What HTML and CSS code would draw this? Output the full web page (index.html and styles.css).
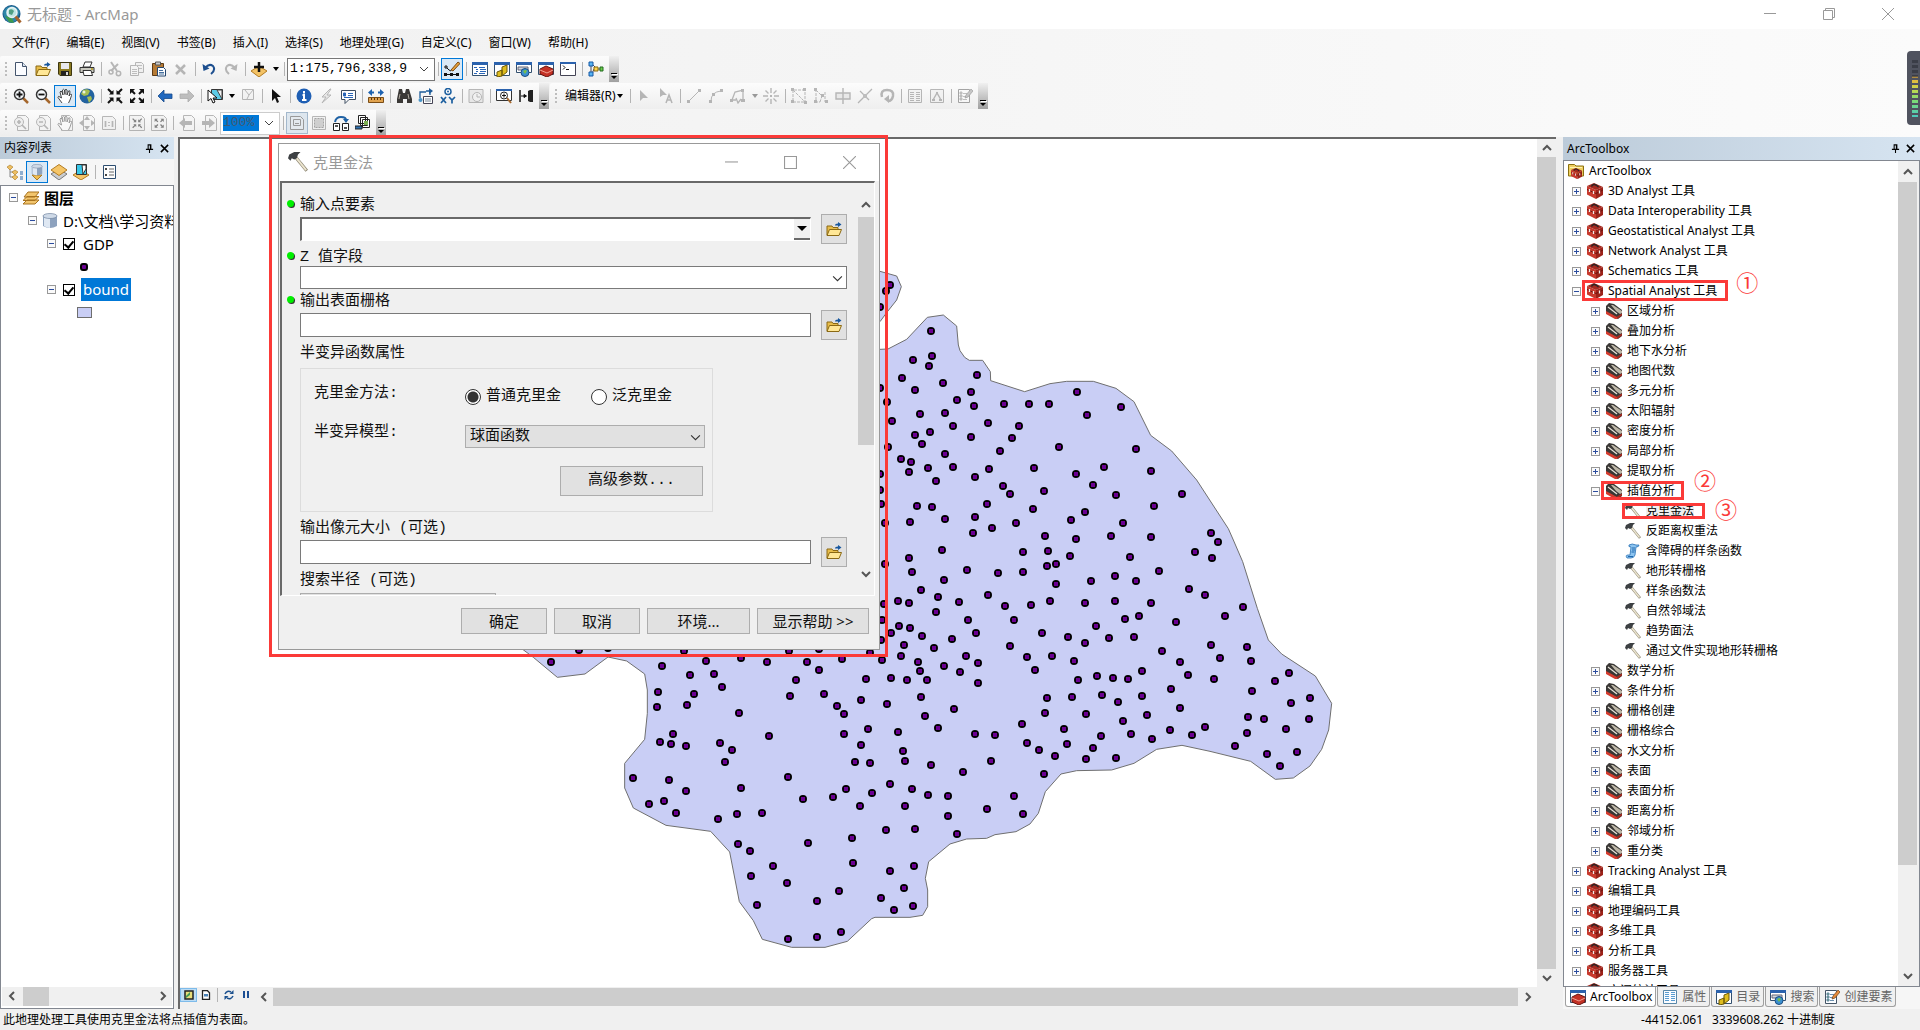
FILE: index.html
```html
<!DOCTYPE html>
<html lang="zh-CN">
<head>
<meta charset="utf-8">
<title>无标题 - ArcMap</title>
<link rel="stylesheet" href="styles.css">
</head>
<body>
<svg class="sprite" aria-hidden="true">
  <symbol id="app" viewBox="0 0 20 20"><circle cx="9.500" cy="10" r="9" fill="#1c5a8c"/><path d="M1 8q3-6 9-6 6 1 8 6l-4 9-6 2q-6-3-7-11z" fill="#2d86a8"/><path d="M3 12l4 6 5 1-2-5z" fill="#3f9a4c"/><circle cx="10" cy="8.500" r="5" fill="#bfe6e4" stroke="#e8f2f4" stroke-width="1.500"/><path d="M7 6q3-2 5 1l-2 4-3-1z" fill="#4f9f83"/><path d="M13.500 12.500l5 6" stroke="#a5642d" stroke-width="3"/></symbol>
  <symbol id="new" viewBox="0 0 16 16"><path d="M2.500 1.500h7l4 4v9h-11z" fill="#fbfcff" stroke="#44546c"/><path d="M9.500 1.500v4h4" fill="#dde6f2" stroke="#44546c"/></symbol>
  <symbol id="open" viewBox="0 0 16 16"><path d="M1 14V5h5l1 1.500h5V14z" fill="#e8bd4a" stroke="#8a6914"/><path d="M1 14.500L3.500 8.500h12L13 14.500z" fill="#ffe796" stroke="#8a6914"/><path d="M9 4.500q0-2 3-2V1l3.500 2.500L12 6V4.500z" fill="#17579e"/></symbol>
  <symbol id="save" viewBox="0 0 16 16"><path d="M1.500 1.500h13v13H3l-1.500-1.500z" fill="#8b7a21" stroke="#3d3610"/><path d="M4 2h8v6H4z" fill="#e8e8ec"/><path d="M4 10h8v4.500H4z" fill="#222"/><path d="M9 11h2v3H9z" fill="#ddd"/></symbol>
  <symbol id="print" viewBox="0 0 16 16"><path d="M4 6l2-5h7l-2 5z" fill="#fff" stroke="#333"/><path d="M1 6.500h14v5H1z" fill="#c9c9c0" stroke="#333"/><path d="M4 9.500h8l1.500 5H5z" fill="#fff" stroke="#333"/><path d="M12 8h2" stroke="#b39a1a" stroke-width="1.500"/></symbol>
  <symbol id="cut" viewBox="0 0 16 16"><path d="M4 1l6 9M11 3l-7 7" stroke="#777" stroke-width="2" fill="none"/><circle cx="4" cy="11" r="2" fill="none" stroke="#777" stroke-width="1.500"/><circle cx="11.500" cy="12.500" r="2.200" fill="none" stroke="#777" stroke-width="1.500"/></symbol>
  <symbol id="copy" viewBox="0 0 16 16"><path d="M6.500 1.500h6l2 2v8h-8z" fill="#ececec" stroke="#777"/><path d="M1.500 4.500h6l2 2v8h-8z" fill="#f4f4f4" stroke="#777"/><path d="M3 8.500h5M3 10.500h5M3 12.500h5M8 4.500h5M10 7.500h3" stroke="#888"/></symbol>
  <symbol id="paste" viewBox="0 0 16 16"><path d="M1.500 2.500h11v12h-11z" fill="#b57a35" stroke="#5d3a14"/><path d="M4.500 1h5v3h-5z" fill="#ccc" stroke="#555"/><path d="M6.500 6.500h6l2 2v6.500h-8z" fill="#fff" stroke="#24466f"/><path d="M8 9.500h4M8 11.500h5M8 13h5" stroke="#46709f"/></symbol>
  <symbol id="del" viewBox="0 0 16 16"><path d="M3 4l9 9M12 4l-9 9" stroke="#777" stroke-width="2.500"/></symbol>
  <symbol id="undo" viewBox="0 0 16 16"><path d="M4 7q4-5 8-2 3 4-2 8" fill="none" stroke="#1d4f8f" stroke-width="2"/><path d="M1.500 3l1 7 6-2.500z" fill="#1d4f8f"/></symbol>
  <symbol id="redo" viewBox="0 0 16 16"><path d="M12 7q-4-5-8-2-3 4 2 8" fill="none" stroke="#777" stroke-width="2"/><path d="M14.500 3l-1 7-6-2.500z" fill="#777"/></symbol>
  <symbol id="add" viewBox="0 0 16 16"><path d="M0 10l8-5 8 5-8 6z" fill="#f3c265" stroke="#b27b22"/><path d="M8 1v10M3 6h10" stroke="#111" stroke-width="2.500"/></symbol>
  <symbol id="sketch" viewBox="0 0 16 16"><path d="M7 9L14 1l2 1.500L9 10z" fill="#e8a23c" stroke="#7b4a10"/><path d="M1 5h2v2H1zM3 7l2 2 2 1" fill="none" stroke="#111"/><path d="M0 12h3v3H0zM6 12h3v3H6zM12 12h3v3h-3zM3 13h10v1H3z" fill="#111"/></symbol>
  <symbol id="toc" viewBox="0 0 16 16"><path d="M.5 1.500h15v13H.5z" fill="#fff" stroke="#33506f"/><path d="M0 1h16v3H0z" fill="#2b62ad"/><path d="M2 6.500h3M4 8.500h2M4 10.500h2M2 12.500h3M7 6.500h6M8 8.500h6M8 10.500h6M7 12.500h6" stroke="#2a66b8"/></symbol>
  <symbol id="catalog" viewBox="0 0 16 16"><path d="M.5 1.500h15v13H.5z" fill="#fff" stroke="#33506f"/><path d="M0 1h16v3H0z" fill="#2b62ad"/><path d="M8 6l5-2v7l-5 4zM3 11l5-2v6l-5 1z" fill="#dfbd1e" stroke="#6b5808"/></symbol>
  <symbol id="search" viewBox="0 0 16 16"><path d="M.5 1.500h15v10H.5z" fill="#fff" stroke="#33506f"/><path d="M0 1h16v3H0z" fill="#2b62ad"/><path d="M2 6h10v3H2z" fill="#cfd6de" stroke="#667"/><circle cx="9" cy="11.500" r="4" fill="#3b8fd0" stroke="#1a4c80"/><path d="M7 10q3-2 4 0l-2 3z" fill="#76bf4b"/></symbol>
  <symbol id="tbwin" viewBox="0 0 16 16"><path d="M.5 1.500h15v12H.5z" fill="#fff" stroke="#33506f"/><path d="M0 1h16v3H0z" fill="#2b62ad"/><path d="M2 8l6-3 7 3v5l-6 3-7-3z" fill="#c43125" stroke="#651510"/><path d="M2 9l7 3 6-3" stroke="#f0a090" fill="none"/></symbol>
  <symbol id="python" viewBox="0 0 16 16"><path d="M.5 1.500h15v13H.5z" fill="#fff" stroke="#445"/><path d="M0 1h16v2H0z" fill="#2b62ad"/><path d="M3 4.500l2 2-2 2M6 8.500h3" stroke="#111" fill="none"/></symbol>
  <symbol id="model" viewBox="0 0 16 16"><path d="M3 5v6M4 3l5 5H6l-2 5M9 8h5" stroke="#445" fill="none"/><path d="M1 1h4v4H1zM1 11h4v4H1z" fill="#58b4f2" stroke="#1759a5"/><path d="M6 6h4v4H6z" fill="#ffd34a" stroke="#8a6a10"/><path d="M12 6h3v4h-3z" fill="#6ccc4a" stroke="#236b20"/></symbol>
  <symbol id="zin" viewBox="0 0 16 16"><path d="M10 10l5 5" stroke="#a5672c" stroke-width="2.500"/><circle cx="6.500" cy="6.500" r="5" fill="#f5f8fb" stroke="#333" stroke-width="1.500"/><path d="M6.500 3.500v6M3.500 6.500h6" stroke="#111" stroke-width="1.800"/></symbol>
  <symbol id="zout" viewBox="0 0 16 16"><path d="M10 10l5 5" stroke="#a5672c" stroke-width="2.500"/><circle cx="6.500" cy="6.500" r="5" fill="#f5f8fb" stroke="#333" stroke-width="1.500"/><path d="M3.500 6.500h6" stroke="#111" stroke-width="1.800"/></symbol>
  <symbol id="hand" viewBox="0 0 16 16"><path d="M5 15L1 9.500q0-2 2-.500l1.500 1L3 4q1-2 2 0l1 3-.5-5q1-1.500 2 0L8 6.500V2q1-1.500 2 0v5l1.500-4q1.500-1 1.500 1l-1 4 1.500-2q1.500 0 1 1.500L13 12l-1.500 3" fill="#fff" stroke="#333" stroke-width=".9"/></symbol>
  <symbol id="globe" viewBox="0 0 16 16"><circle cx="8" cy="8" r="7.500" fill="#23639f"/><path d="M4 2q5-2 7 1l-2 4-4 1-3-2zM8 9l4-1 1 3-3 4z" fill="#a4bd52"/><circle cx="5" cy="4" r="1.500" fill="#e9f3e0"/></symbol>
  <symbol id="fixin" viewBox="0 0 16 16"><path d="M1 1l4 4M15 1l-4 4M1 15l4-4M15 15l-4-4" stroke="#111" stroke-width="2"/><path d="M6.500 2v4.500H2zM9.500 2v4.500H14zM6.500 14V9.500H2zM9.500 14V9.500H14z" fill="#111"/></symbol>
  <symbol id="fixout" viewBox="0 0 16 16"><path d="M3 3l3 3M13 3l-3 3M3 13l3-3M13 13l-3-3" stroke="#111" stroke-width="2"/><path d="M1 1h5L1 6zM15 1h-5l5 5zM1 15h5l-5-5zM15 15h-5l5-5z" fill="#111"/></symbol>
  <symbol id="back" viewBox="0 0 16 16"><path d="M1 8l6-6v4h8v4.500H7V14z" fill="#2068bf" stroke="#174a8c" stroke-width=".8"/></symbol>
  <symbol id="fwd" viewBox="0 0 16 16"><path d="M15 8L9 2v4H1v4.500h8V14z" fill="#888" stroke="#666" stroke-width=".8"/></symbol>
  <symbol id="selfeat" viewBox="0 0 16 16"><path d="M4.500 1.500h11v10h-11z" fill="#5ccbe6" stroke="#333"/><path d="M10 2h5v9z" fill="#f2f2f2" stroke="#444"/><path d="M1 2v11l3-2.500 2 4.500 2-1-2-4h4z" fill="#fff" stroke="#111"/></symbol>
  <symbol id="clearsel" viewBox="0 0 16 16"><path d="M2.500 1.500h11v10h-11z" fill="#f0f0f0" stroke="#777"/><path d="M5 2l4 5 4-5M9 7l-2 4" stroke="#777" fill="none"/></symbol>
  <symbol id="pointer" viewBox="0 0 16 16"><path d="M4 1v12l3-3 2 5 2-1-2-5h4z" fill="#111"/></symbol>
  <symbol id="info" viewBox="0 0 16 16"><circle cx="8" cy="8" r="7.500" fill="#1f5fb4"/><path d="M8 3v2.500M6.500 7H8v5M6 12h4.500" stroke="#fff" stroke-width="2" fill="none"/></symbol>
  <symbol id="flash" viewBox="0 0 16 16"><path d="M12 1L4 9h4l-4 6 9-8H9l4-6z" fill="#ddd" stroke="#777"/></symbol>
  <symbol id="popup" viewBox="0 0 16 16"><path d="M1.500 2.500h14v9H9l-4 4v-4H1.500z" fill="#fff" stroke="#3c4c60"/><path d="M3.500 5h2v3h-2zM8 5.500h5M8 7.500h5M4 9.500h9" fill="#2a66b8" stroke="#2a66b8"/></symbol>
  <symbol id="measure" viewBox="0 0 16 16"><path d="M0 4.500L4 1v2.500h2v2H4V8zM16 4.500L12 1v2.500h-2v2h2V8z" fill="#1d62b0"/><path d="M.5 9.500h15v5H.5z" fill="#e0a24e" stroke="#7a4d16"/><path d="M3.500 10v2M6.500 10v2M9.500 10v2M12.500 10v2" stroke="#5a350c"/></symbol>
  <symbol id="find" viewBox="0 0 16 16"><path d="M3 1h3l1 4h2l1-4h3l3 10v4h-5v-4H7v4H1v-4z" fill="#3a3836"/><path d="M4 6l-1 5M12 6l1 5" stroke="#b0aaa0"/></symbol>
  <symbol id="route" viewBox="0 0 16 16"><path d="M2 10V4h6M8 3h4v4" stroke="#1d5c9a" stroke-width="1.300" fill="none"/><path d="M11 0l4 3-4 3z" fill="#1d5c9a"/><path d="M5.500 8.500h9v7h-9z" fill="#fff" stroke="#445"/><path d="M7 11h6M7 13h6" stroke="#789"/><circle cx="2.500" cy="12" r="2" fill="#4a95c8"/></symbol>
  <symbol id="xy" viewBox="0 0 16 16"><circle cx="8" cy="3.500" r="3" fill="#fff" stroke="#1c5f9f" stroke-width="1.500"/><circle cx="8" cy="3.500" r="1" fill="#1c5f9f"/><path d="M1 9l5 6M6 9l-5 6M9 9l3 3 3-3M12 12v3.500" stroke="#1c5f9f" stroke-width="1.700" fill="none"/></symbol>
  <symbol id="time" viewBox="0 0 16 16"><path d="M1 1.500h14v13H1z" fill="#ddd" stroke="#777"/><circle cx="9" cy="9" r="4.500" fill="#eee" stroke="#777"/><path d="M9 6v3h3" stroke="#777" fill="none"/></symbol>
  <symbol id="magnify" viewBox="0 0 16 16"><path d="M.5 1.500h15v11H.5z" fill="#fff" stroke="#333"/><path d="M0 1h16v2H0z" fill="#2b62ad"/><path d="M11 10l4 5" stroke="#a5672c" stroke-width="2"/><circle cx="8" cy="7.500" r="3.500" fill="#fff" stroke="#222"/><path d="M8 5.500v4M6 7.500h4" stroke="#111"/></symbol>
  <symbol id="swipe" viewBox="0 0 16 16"><path d="M2 2v12" stroke="#111" stroke-width="1.500"/><path d="M3 8h5M6 6.500L8.500 8 6 9.500z" stroke="#111" fill="#111"/><path d="M10 3l2-1h3v12h-3l-2-1z" fill="#222"/></symbol>
  <symbol id="play" viewBox="0 0 16 16"><path d="M4 2v11l3-3h5z" fill="#777"/></symbol>
  <symbol id="playa" viewBox="0 0 16 16"><path d="M2 0v9l3-2h4z" fill="#777"/><path d="M8 15l3-8 3 8M9 12h4" stroke="#777" stroke-width="1.500" fill="none"/></symbol>
  <symbol id="line" viewBox="0 0 16 16"><path d="M3 13L13 3" stroke="#777"/><path d="M1 12h3v3H1zM12 1h3v3h-3z" fill="#777"/></symbol>
  <symbol id="arc" viewBox="0 0 16 16"><path d="M3 13Q3 4 13 3" stroke="#777" fill="none"/><path d="M1 12h3v3H1zM12 1h3v3h-3zM4 5h3v3H4z" fill="#777"/></symbol>
  <symbol id="trace" viewBox="0 0 16 16"><path d="M2 12l3-8 8-2v10M2 12h4M6 10l2 5 3-4" stroke="#777" fill="none" stroke-width="1.300"/><path d="M0 11h3v3H0zM11 1h3v3h-3zM11 11h4v3h-4z" fill="#777"/></symbol>
  <symbol id="rays" viewBox="0 0 16 16"><path d="M8 0v5M8 11v5M0 8h5M11 8h5M2.500 2.500l3 3M13.500 2.500l-3 3M2.500 13.500l3-3M13.500 13.500l-3-3" stroke="#777" stroke-width="1.400"/><path d="M7 7h2v2H7z" fill="#777"/></symbol>
  <symbol id="verts" viewBox="0 0 16 16"><path d="M2 2l12 12V3M2 2v12h12M3 2h9" stroke="#777" fill="none" stroke-dasharray="3 1"/><path d="M0 0h3v3H0zM12 0h3v3h-3zM0 12h3v3H0zM13 13h3v3h-3z" fill="#777"/></symbol>
  <symbol id="reshape" viewBox="0 0 16 16"><path d="M3 1v13h4M3 2l6 6-2 6M12 4v10" stroke="#777" fill="none" stroke-dasharray="3 1"/><path d="M1 0h3v3H1zM1 12h3v3H1zM8 6h3v3H8zM12 12h3v3h-3z" fill="#777"/></symbol>
  <symbol id="split" viewBox="0 0 16 16"><path d="M1 5h14v6H1zM8 0v16" fill="#ddd" stroke="#777" stroke-width="1.400"/></symbol>
  <symbol id="cross" viewBox="0 0 16 16"><path d="M1 15L15 1M3 3l9 9" stroke="#777" stroke-width="1.300"/><path d="M6 6h4v4H6z" fill="#888"/></symbol>
  <symbol id="rotate" viewBox="0 0 16 16"><path d="M3 9Q1 2 8 2t6 6q-1 5-5 5" stroke="#777" stroke-width="2.500" fill="none"/><path d="M10 7v8l-5-4z" fill="#777"/></symbol>
  <symbol id="table" viewBox="0 0 16 16"><path d="M1.500 1.500h13v13h-13z" fill="#eee" stroke="#777"/><path d="M3 4.500h4M3 6.500h4M3 8.500h4M3 10.500h4M3 12.500h4M9 4.500h4M9 6.500h4M9 8.500h4M9 10.500h4M9 12.500h4" stroke="#777"/></symbol>
  <symbol id="props" viewBox="0 0 16 16"><path d="M1.500 1.500h13v13h-13z" fill="#fafcff" stroke="#5887a8"/><path d="M3 3.500h4M3 5.500h4M3 7.500h4M3 9.500h4M3 11.500h4M9 3.500h4M9 5.500h4M9 7.500h4M9 9.500h4M9 11.500h4" stroke="#5a9cd0"/></symbol>
  <symbol id="tri" viewBox="0 0 16 16"><path d="M1.500 1.500h13v13h-13z" fill="#eee" stroke="#777"/><path d="M4 12l4-7 4 7" stroke="#777" fill="none" stroke-width="1.400"/><path d="M3 11h3v2H3zM10 11h3v2h-3zM7 4h2v2H7z" fill="#777"/></symbol>
  <symbol id="create" viewBox="0 0 16 16"><path d="M1.500 1.500h11v13h-11z" fill="#fbfdff" stroke="#456"/><path d="M3 4h2v2H3zM3 7h2v2H3zM3 10h2v2H3zM6 5.500h4M6 8.500h3M6 11.500h4" fill="#5a9a50" stroke="#6c8fae"/><path d="M8 10l1-3 5-6 2 2-5 6z" fill="#e58a3a" stroke="#6d4016" stroke-width=".7"/></symbol>
  <symbol id="page" viewBox="0 0 16 16"><path d="M4.500.5h8l3 3v12h-11z" fill="#f4f4f4" stroke="#777"/></symbol>
  <symbol id="pzin" viewBox="0 0 16 16"><use href="#page"/><circle cx="6" cy="7" r="4.500" fill="#e8e8e8" stroke="#777"/><path d="M6 5v4M4 7h4M9 10l4 4" stroke="#777" stroke-width="1.700"/></symbol>
  <symbol id="pzout" viewBox="0 0 16 16"><use href="#page"/><circle cx="6" cy="7" r="4.500" fill="#e8e8e8" stroke="#777"/><path d="M4 7h4M9 10l4 4" stroke="#777" stroke-width="1.700"/></symbol>
  <symbol id="phand" viewBox="0 0 16 16"><use href="#page"/><use href="#hand"/></symbol>
  <symbol id="pfull" viewBox="0 0 16 16"><use href="#page"/><path d="M8 1l3 4H5zM8 15l3-4H5zM0 8l4-3v6zM16 8l-4-3v6z" fill="#777"/></symbol>
  <symbol id="pone" viewBox="0 0 16 16"><path d="M1.500 1.500h10l3 3v10h-13z" fill="#eee" stroke="#777"/><path d="M4.500 6v6M8 7v1M8 10v1M11.500 6v6" stroke="#777" stroke-width="1.700"/></symbol>
  <symbol id="pin4" viewBox="0 0 16 16"><path d="M.5.5h12l3 3v12H.5z" fill="#eee" stroke="#777"/><g transform="translate(3 3) scale(.65)"><use href="#fixin" width="16" height="16"/></g></symbol>
  <symbol id="pout4" viewBox="0 0 16 16"><path d="M.5.5h12l3 3v12H.5z" fill="#eee" stroke="#777"/><g transform="translate(3 3) scale(.65)"><use href="#fixout" width="16" height="16"/></g></symbol>
  <symbol id="pback" viewBox="0 0 16 16"><use href="#page"/><path d="M0 8l6-5v3h7v4H6v3z" fill="#777"/></symbol>
  <symbol id="pfwd" viewBox="0 0 16 16"><use href="#page"/><path d="M14 8L8 3v3H1v4h7v3z" fill="#777"/></symbol>
  <symbol id="draft" viewBox="0 0 16 16"><path d="M1.500 1.500h10l3 3v10h-13z" fill="#e4e9ee" stroke="#999"/><path d="M4.500 4.500h7v6h-7zM6 8.500h4" fill="none" stroke="#999"/></symbol>
  <symbol id="focus" viewBox="0 0 16 16"><path d="M1.500 1.500h13v13h-13z" fill="#eee" stroke="#777"/><path d="M3.500 3.500h9v9h-9z" fill="#aaa" stroke="#555" stroke-dasharray="2 1"/></symbol>
  <symbol id="chglay" viewBox="0 0 16 16"><path d="M2 7q1-5 6-5t5 3" stroke="#1f62a5" stroke-width="2" fill="none"/><path d="M10 4h6l-3 4z" fill="#1f62a5"/><path d="M.5 8.500h6v7h-6zM9.500 8.500h6v7h-6z" fill="#fff" stroke="#222"/><path d="M2 10h3v2H2zM11 12h3v2h-3z" fill="#555"/></symbol>
  <symbol id="ddp" viewBox="0 0 16 16"><path d="M3.500.5h7v8h-7zM5.500 2.500h7v8h-7zM7.500 4.500h7v8h-7z" fill="#fff" stroke="#222"/><path d="M9 6h4v4H9z" fill="#7cae52"/><path d="M0 11h7v3H0z" fill="#2d71b2" stroke="#222"/></symbol>
  <symbol id="hammer" viewBox="0 0 16 16"><path d="M6 4l9 11" stroke="#8d8673" stroke-width="2.600"/><path d="M6.500 4.500l8 10" stroke="#ece5cf" stroke-width="1.500"/><path d="M0 5l1-3 4-2h5L8 2l-1 3-2 1-2-1-1 2z" fill="#3d4043"/></symbol>
  <symbol id="script" viewBox="0 0 16 16"><path d="M4 2q3-2 7 0h3q0 2-3 2l-1 8q-1 3-4 3H2q-2-3 1-3h2l1-8q-3 0-2-2z" fill="#8cc4f0" stroke="#2b72b5" stroke-width=".8"/><path d="M7 5h3M7 7h3M6.500 9h3M3 13.500h5" stroke="#1f67ad"/></symbol>
  <symbol id="toolbox" viewBox="0 0 16 16"><path d="M0 3l9 4v9l-9-4.500z" fill="#c8392d"/><path d="M9 7l7-3v8l-7 4z" fill="#9c2219"/><path d="M0 3l7-3 9 4-7 3z" fill="#a52a20"/><path d="M4.500 3.500q1-2.500 3-2t4 2.500" stroke="#2a2424" stroke-width="1.500" fill="none"/><path d="M0 6.500L9 10.500l7-3.500" stroke="#6f120c" fill="none"/><path d="M2.500 6v3M6.500 8v3M12.500 7.500v3" stroke="#f3ece8" stroke-width="1.300"/></symbol>
  <symbol id="toolset" viewBox="0 0 16 16"><path d="M0 3l3-3 5 1 8 6v6l-4 3L0 9z" fill="#393735"/><path d="M5 2l2 0 9 6v2l-2 1-4-3z" fill="#bdb7a8"/><path d="M2 4l9 7" stroke="#e8e4da" stroke-width="1.200"/><path d="M0 8l11 6v2H9L0 11z" fill="#d43b2d"/><path d="M11 13.500l5-3v2l-5 3.500z" fill="#a82a20"/></symbol>
  <symbol id="root" viewBox="0 0 16 16"><path d="M.5 13V1.500h6L8 3h7.500v10z" fill="#f0d060" stroke="#8a7010"/><path d="M2 4.500h12" stroke="#fff3b0"/><g transform="translate(3 5) scale(.7)"><use href="#toolbox" width="16" height="16"/></g></symbol>
  <symbol id="layers" viewBox="0 0 16 16"><path d="M0 14l4-4h12l-4 4zM0 10.500l4-4h12l-4 4zM1 7l4-5h11l-4 5z" fill="#f2c56d" stroke="#a8731f"/></symbol>
  <symbol id="db" viewBox="0 0 16 16"><path d="M1 3v10q7 4 14 0V3z" fill="#8da2be"/><path d="M2 4v9q3 2 6 2V5z" fill="#dfe8f3"/><ellipse cx="8" cy="3" rx="7" ry="2.500" fill="#cfdae8" stroke="#7385a0" stroke-width=".7"/></symbol>
  <symbol id="bydraw" viewBox="0 0 16 16"><path d="M3 5v8h4M3 8h4" stroke="#888" fill="none"/><path d="M3 1l3 2-3 3-3-3zM8 6l3 2-3 3-3-3zM8 11l3 2-3 3-3-3z" fill="#eebf62" stroke="#a87926" stroke-width=".6"/><path d="M13 8h3M13 10h3M13 13h3M13 15h3" stroke="#2a66a8"/></symbol>
  <symbol id="bysrc" viewBox="0 0 16 16"><path d="M3 11h10l-5 5z" fill="#f0bd50" stroke="#a87926"/><g transform="translate(2 0) scale(.75)"><use href="#db" width="16" height="16"/></g></symbol>
  <symbol id="byvis" viewBox="0 0 16 16"><path d="M0 10l8-5 8 5-8 6z" fill="#c9ccd0" stroke="#777"/><path d="M0 6l8-5.500L16 6l-8 5.500z" fill="#f5c567" stroke="#b27b22"/></symbol>
  <symbol id="bysel" viewBox="0 0 16 16"><path d="M0 11l8-5 8 5-8 5z" fill="#f5c567" stroke="#b27b22"/><path d="M3.500.5h10v10h-10z" fill="#39c7e8" stroke="#333"/><path d="M9 1h4v4l-3 5z" fill="#fff" stroke="#333"/></symbol>
  <symbol id="opts" viewBox="0 0 16 16"><path d="M2.500 1.500h12v13h-12z" fill="#fdfdfd" stroke="#2d4d70"/><path d="M4 4h2v2H4zM4 10h2v2H4z" fill="#444"/><path d="M8 5h5M8 8h5M8 11h5" stroke="#666"/></symbol>
  <symbol id="mapview" viewBox="0 0 10 10"><path d="M1 1h8v8H1z" fill="#e8dd7a" stroke="#222" stroke-width="1.500"/><path d="M2 6l4-4v3L2 8z" fill="#3f9b58"/></symbol>
  <symbol id="layview" viewBox="0 0 10 10"><path d="M1.500.7h5l2 2v6.600h-7z" fill="#fff" stroke="#222" stroke-width="1.300"/><path d="M3 4h4v2.500H3z" fill="#4a81b5"/></symbol>
  <symbol id="refresh" viewBox="0 0 10 10"><path d="M1 4q2-4 6-2M9 6q-2 4-6 2" stroke="#1b508e" stroke-width="1.500" fill="none"/><path d="M9.500 0v4h-4zM.5 10V6h4z" fill="#1b508e"/></symbol>
  <symbol id="pause" viewBox="0 0 10 10"><path d="M2 1h2v7H2zM6 1h2v7H6z" fill="#1d4f94"/></symbol>
  <symbol id="chev" viewBox="0 0 10 10"><path d="M1 3l4 4 4-4" stroke="currentColor" stroke-width="2" fill="none"/></symbol>
  <symbol id="chevthin" viewBox="0 0 10 10"><path d="M1 3l4 4 4-4" stroke="currentColor" fill="none"/></symbol>
  <symbol id="pin" viewBox="0 0 10 10"><path d="M3.500 6V1h3v5M6 1v5M1 6h8M5 6v4" stroke="#000" stroke-width="1.200" fill="none"/></symbol>
  <symbol id="x" viewBox="0 0 10 10"><path d="M1 1l8 8M9 1L1 9" stroke="currentColor" stroke-width="1.700"/></symbol>
  <symbol id="xthin" viewBox="0 0 12 12"><path d="M0 0l12 12M12 0L0 12" stroke="currentColor"/></symbol>
  <symbol id="min" viewBox="0 0 12 12"><path d="M0 5.500h12" stroke="currentColor"/></symbol>
  <symbol id="max" viewBox="0 0 12 12"><path d="M.5.5h11v11H.5z" fill="none" stroke="currentColor"/></symbol>
  <symbol id="restore" viewBox="0 0 12 12"><path d="M.5 2.500h9v9h-9zM2.500 2V.5h9v9H10" fill="none" stroke="currentColor"/></symbol>
</svg>

<div class="app">
  <header class="titlebar">
    <svg class="logo"><use href="#app"/></svg>
    <h1>无标题 - ArcMap</h1>
    <div class="winbtns">
      <button aria-label="最小化"><svg><use href="#min"/></svg></button>
      <button aria-label="还原"><svg><use href="#restore"/></svg></button>
      <button aria-label="关闭"><svg><use href="#xthin"/></svg></button>
    </div>
  </header>

  <nav class="menubar">
    <button>文件(F)</button><button>编辑(E)</button><button>视图(V)</button><button>书签(B)</button><button>插入(I)</button><button>选择(S)</button><button>地理处理(G)</button><button>自定义(C)</button><button>窗口(W)</button><button>帮助(H)</button>
  </nav>

  <div class="toolrow">
    <div class="toolbar">
      <i class="grip"></i>
      <button class="tb"><svg><use href="#new"/></svg></button><button class="tb"><svg><use href="#open"/></svg></button><button class="tb"><svg><use href="#save"/></svg></button><button class="tb"><svg><use href="#print"/></svg></button><i class="sep"></i>
      <button class="tb" disabled><svg><use href="#cut"/></svg></button><button class="tb" disabled><svg><use href="#copy"/></svg></button><button class="tb"><svg><use href="#paste"/></svg></button><button class="tb" disabled><svg><use href="#del"/></svg></button><i class="sep"></i>
      <button class="tb"><svg><use href="#undo"/></svg></button><button class="tb" disabled><svg><use href="#redo"/></svg></button><i class="sep"></i>
      <button class="tb"><svg><use href="#add"/></svg></button><button class="drop" aria-label="添加数据选项"></button><i class="sep"></i>
      <span class="combo scale"><input type="text" value="1:175,796,338,9" aria-label="比例尺"><button aria-label="展开"><svg><use href="#chevthin"/></svg></button></span><i class="sep"></i>
      <button class="tb on"><svg><use href="#sketch"/></svg></button><i class="sep"></i>
      <button class="tb"><svg><use href="#toc"/></svg></button><button class="tb"><svg><use href="#catalog"/></svg></button><button class="tb"><svg><use href="#search"/></svg></button><button class="tb"><svg><use href="#tbwin"/></svg></button><button class="tb"><svg><use href="#python"/></svg></button><i class="sep"></i>
      <button class="tb"><svg><use href="#model"/></svg></button>
      <button class="more" aria-label="工具条选项"></button>
    </div>
  </div>
  <div class="toolrow">
    <div class="toolbar">
      <i class="grip"></i>
      <button class="tb"><svg><use href="#zin"/></svg></button><button class="tb"><svg><use href="#zout"/></svg></button><button class="tb on"><svg><use href="#hand"/></svg></button><button class="tb"><svg><use href="#globe"/></svg></button><i class="sep"></i>
      <button class="tb"><svg><use href="#fixin"/></svg></button><button class="tb"><svg><use href="#fixout"/></svg></button><i class="sep"></i>
      <button class="tb"><svg><use href="#back"/></svg></button><button class="tb" disabled><svg><use href="#fwd"/></svg></button><i class="sep"></i>
      <button class="tb"><svg><use href="#selfeat"/></svg></button><button class="drop" aria-label="选择选项"></button><button class="tb" disabled><svg><use href="#clearsel"/></svg></button><i class="sep"></i>
      <button class="tb"><svg><use href="#pointer"/></svg></button><i class="sep"></i>
      <button class="tb"><svg><use href="#info"/></svg></button><button class="tb" disabled><svg><use href="#flash"/></svg></button><button class="tb"><svg><use href="#popup"/></svg></button><i class="sep"></i>
      <button class="tb"><svg><use href="#measure"/></svg></button><i class="sep"></i>
      <button class="tb"><svg><use href="#find"/></svg></button><button class="tb"><svg><use href="#route"/></svg></button><button class="tb"><svg><use href="#xy"/></svg></button><i class="sep"></i>
      <button class="tb" disabled><svg><use href="#time"/></svg></button><i class="sep"></i>
      <button class="tb"><svg><use href="#magnify"/></svg></button><button class="tb"><svg><use href="#swipe"/></svg></button>
      <button class="more" aria-label="工具条选项"></button>
    </div>
    <div class="toolbar">
      <i class="grip"></i>
      <button class="editor">编辑器(R)<i class="caret"></i></button><i class="sep"></i>
      <button class="tb" disabled><svg><use href="#play"/></svg></button><button class="tb" disabled><svg><use href="#playa"/></svg></button><i class="sep"></i>
      <button class="tb" disabled><svg><use href="#line"/></svg></button><button class="tb" disabled><svg><use href="#arc"/></svg></button><button class="tb" disabled><svg><use href="#trace"/></svg></button><button class="drop" disabled aria-label="构造选项"></button><button class="tb" disabled><svg><use href="#rays"/></svg></button><i class="sep"></i>
      <button class="tb" disabled><svg><use href="#verts"/></svg></button><button class="tb" disabled><svg><use href="#reshape"/></svg></button><button class="tb" disabled><svg><use href="#split"/></svg></button><button class="tb" disabled><svg><use href="#cross"/></svg></button><button class="tb" disabled><svg><use href="#rotate"/></svg></button><i class="sep"></i>
      <button class="tb" disabled><svg><use href="#table"/></svg></button><button class="tb" disabled><svg><use href="#tri"/></svg></button><i class="sep"></i>
      <button class="tb" disabled><svg><use href="#create"/></svg></button>
      <button class="more" aria-label="工具条选项"></button>
    </div>
  </div>
  <div class="toolrow">
    <div class="toolbar">
      <i class="grip"></i>
      <button class="tb" disabled><svg><use href="#pzin"/></svg></button><button class="tb" disabled><svg><use href="#pzout"/></svg></button><button class="tb" disabled><svg><use href="#phand"/></svg></button><button class="tb" disabled><svg><use href="#pfull"/></svg></button><button class="tb" disabled><svg><use href="#pone"/></svg></button><i class="sep"></i>
      <button class="tb" disabled><svg><use href="#pin4"/></svg></button><button class="tb" disabled><svg><use href="#pout4"/></svg></button><i class="sep"></i>
      <button class="tb" disabled><svg><use href="#pback"/></svg></button><button class="tb" disabled><svg><use href="#pfwd"/></svg></button>
      <span class="combo percent"><span class="pct">100%</span><button disabled aria-label="展开"><svg><use href="#chevthin"/></svg></button></span><i class="sep"></i>
      <button class="tb dim"><svg><use href="#draft"/></svg></button><button class="tb" disabled><svg><use href="#focus"/></svg></button><button class="tb"><svg><use href="#chglay"/></svg></button><button class="tb"><svg><use href="#ddp"/></svg></button>
      <button class="more" aria-label="工具条选项"></button>
    </div>
  </div>

  <main class="work">
    <aside class="contents">
      <div class="panelhead"><h2>内容列表</h2><button aria-label="固定"><svg><use href="#pin"/></svg></button><button aria-label="关闭"><svg><use href="#x"/></svg></button></div>
      <div class="listbar"><button class="tb"><svg><use href="#bydraw"/></svg></button><button class="tb on"><svg><use href="#bysrc"/></svg></button><button class="tb"><svg><use href="#byvis"/></svg></button><button class="tb"><svg><use href="#bysel"/></svg></button><i class="sep"></i><button class="tb"><svg><use href="#opts"/></svg></button></div>
      <div class="layerbox">
        <ul class="layers">
          <li><div class="lrow"><button class="exp open" aria-label="折叠"></button><svg><use href="#layers"/></svg><b>图层</b></div>
            <ul>
              <li><div class="lrow"><button class="exp open" aria-label="折叠"></button><svg><use href="#db"/></svg><span>D:\文档\学习资料</span></div>
                <ul>
                  <li><div class="lrow"><button class="exp open" aria-label="折叠"></button><label><input type="checkbox" checked><span>GDP</span></label></div><div class="lrow sym"><i class="dot"></i></div></li>
                  <li><div class="lrow"><button class="exp open" aria-label="折叠"></button><label><input type="checkbox" checked><span class="sel">bound</span></label></div><div class="lrow sym"><i class="patch"></i></div></li>
                </ul>
              </li>
            </ul>
          </li>
        </ul>
        <div class="hscroll"><button aria-label="向左"><svg class="left"><use href="#chev"/></svg></button><div class="track"><i class="thumb short"></i></div><button aria-label="向右"><svg class="right"><use href="#chev"/></svg></button></div>
      </div>
    </aside>

    <section class="mapwin">
      <div class="maprow">
        <div class="canvas">
          <svg class="map" role="img" aria-label="bound 与 GDP 图层">
            <g transform="translate(700 401) scale(.33333)">
              <path class="land" d="M0-572L24-573 80-602 142-668 190-675 230-642 235-585 240-568 254-548 268-539H308L331-505 332-478 434-445 510-469 560-476H640L708-455 762-415 812-314 875-267 950-180 1045-34 1060 0 1088 65 1132 205 1165 300 1205 342 1306 408 1355 490 1346 570 1325 628 1290 678 1240 714 1186 718 1112 664 990 634 906 616 830 628 762 670 695 690 590 692 543 702 496 755 475 820 450 852 408 875 345 884 320 895 260 897 210 912 146 965 136 1015 143 1050V1100L128 1126 90 1132H-15L-25 1136-98 1204-165 1222H-265L-353 1198-380 1142-422 1085-451 936-508 874-642 856-740 804-766 744V670L-706 598-698 520V450L-706 402-760 363-816 351-885 402-968 412-1040 352-1072 328V0z"/>
              <path class="land" d="M-40-812L0-806 50-792 64-760 50-720 20-682 0-655-60-620z"/>
              <g class="dots">
                <path id="pu" transform="translate(0 -840)" d="M30 75h0M18 93h0M0 141h0M153 213h0M99 300h0M156 288h0M147 318h0M66 354h0M189 369h0M291 345h0M105 390h0M273 396h0M231 420h0M282 438h0M0 384h0M21 426h0M120 462h0M195 459h0M36 483h0M219 498h0M372 432h0M447 432h0M507 432h0M591 396h0M621 465h0M723 441h0M324 489h0M417 498h0M396 534h0M105 525h0M150 516h0M126 552h0M273 531h0M24 561h0M63 597h0M93 606h0M195 582h0M360 573h0M537 561h0M768 567h0M87 636h0M144 624h0M219 621h0M327 627h0M462 624h0M588 642h0M672 621h0M813 633h0M168 663h0M285 651h0M369 678h0M390 702h0M492 693h0M639 675h0M708 705h0M906 702h0M0 642h0M0 690h0M3 732h0M111 738h0M156 741h0M321 732h0M459 747h0M615 756h0M822 738h0M90 786h0M195 777h0M285 771h0M408 789h0M573 780h0M729 789h0M15 789h0M279 819h0M336 804h0M495 828h0M588 837h0M693 828h0M813 831h0M993 819h0M1014 846h0"/>
                <path id="pm" d="M87 54h0M186 30h0M429 36h0M504 33h0M570 48h0M750 51h0M945 36h0M996 54h0M15 72h0M96 96h0M261 90h0M354 99h0M429 96h0M501 78h0M528 72h0M837 93h0M192 120h0M123 150h0M174 171h0M324 165h0M528 132h0M633 123h0M705 108h0M768 123h0M927 147h0M975 165h0M54 183h0M87 189h0M237 186h0M375 198h0M453 195h0M510 183h0M615 189h0M705 183h0M813 189h0M1089 201h0M12 192h0M168 216h0M264 240h0M402 240h0M6 240h0M735 237h0M777 228h0M888 246h0M1035 228h0M57 258h0M90 264h0M33 279h0M126 288h0M216 297h0M288 279h0M486 279h0M564 291h0M615 309h0M648 258h0M687 294h0M762 291h0M3 300h0M72 315h0M162 324h0M390 318h0M993 315h0M1101 321h0M63 348h0M114 366h0M258 348h0M294 369h0M441 351h0M516 348h0M582 363h0M846 333h0M900 366h0M1020 354h0M1113 363h0M6 360h0M120 393h0M192 378h0M240 396h0M465 390h0M651 408h0M699 414h0M744 417h0M786 393h0M924 405h0M1227 399h0M33 414h0M81 420h0M141 420h0M294 429h0M594 420h0M1002 417h0M1185 423h0M873 447h0M123 471h0M501 474h0M576 471h0M666 465h0M786 468h0M1116 453h0M1290 474h0M21 492h0M222 507h0M714 486h0M1233 489h0M135 528h0M495 519h0M618 522h0M801 525h0M900 504h0M1104 531h0M1152 537h0M1287 537h0M174 564h0M426 552h0M552 567h0M729 543h0M1218 567h0M54 576h0M285 582h0M345 585h0M663 588h0M753 582h0M870 570h0M936 585h0M975 561h0M1101 579h0M441 609h0M561 612h0M816 597h0M1065 618h0M69 633h0M477 630h0M639 624h0M1251 636h0M75 663h0M153 675h0M333 663h0M525 648h0M618 657h0M708 654h0M1161 642h0M249 696h0M492 702h0M1200 678h0M30 732h0M96 747h0M144 765h0M204 768h0M402 768h0M75 798h0M321 807h0M204 828h0M429 822h0M18 870h0M105 867h0M231 882h0"/>
                <path id="pl" transform="translate(-1140 300)" d="M153 66h0M237 30h0M324 24h0M552 32h0M486 78h0M618 63h0M723 54h0M801 66h0M867 32h0M921 66h0M957 27h0M1026 57h0M1110 38h0M570 105h0M642 102h0M666 141h0M474 156h0M582 162h0M471 201h0M561 195h0M888 120h0M957 90h0M1098 117h0M870 168h0M972 162h0M1011 198h0M1083 180h0M1032 222h0M717 219h0M519 282h0M480 306h0M513 312h0M558 318h0M660 309h0M696 330h0M675 366h0M807 288h0M1032 282h0M1104 267h0M1083 315h0M1065 366h0M1110 369h0M399 414h0M507 420h0M558 453h0M723 444h0M864 411h0M447 492h0M492 483h0M528 519h0M654 537h0M711 522h0M786 519h0M909 477h0M999 471h0M1038 447h0M1116 459h0M1080 498h0M714 612h0M750 633h0M924 609h0M1056 594h0M753 708h0M819 678h0M861 729h0M1059 669h0M1170 693h0M1242 678h0M771 795h0M951 783h0M1017 753h0M1143 774h0M1212 744h0M1182 810h0M1239 798h0M864 897h0M951 891h0M1023 876h0"/>
              </g>
              <g class="cores"><use href="#pu"/><use href="#pm"/><use href="#pl"/></g>
            </g>
          </svg>
        </div>
        <div class="vscroll"><button aria-label="向上"><svg class="up"><use href="#chev"/></svg></button><div class="track"><i class="thumb full"></i></div><button aria-label="向下"><svg><use href="#chev"/></svg></button></div>
      </div>
      <div class="viewbar">
        <button class="vb on" aria-label="数据视图"><svg><use href="#mapview"/></svg></button><button class="vb" aria-label="布局视图"><svg><use href="#layview"/></svg></button><i class="sep"></i><button class="vb" aria-label="刷新"><svg><use href="#refresh"/></svg></button><button class="vb" aria-label="暂停"><svg><use href="#pause"/></svg></button>
        <div class="hscroll"><button aria-label="向左"><svg class="left"><use href="#chev"/></svg></button><div class="track"><i class="thumb full"></i></div><button aria-label="向右"><svg class="right"><use href="#chev"/></svg></button></div>
        <i class="corner"></i>
      </div>

      <div class="callout">
        <form class="dialog" onsubmit="return false">
          <header class="dtitle"><svg class="dicon"><use href="#hammer"/></svg><h2>克里金法</h2>
            <div class="winbtns"><button type="button" aria-label="最小化"><svg><use href="#min"/></svg></button><button type="button" aria-label="最大化"><svg><use href="#max"/></svg></button><button type="button" aria-label="关闭"><svg><use href="#xthin"/></svg></button></div>
          </header>
          <div class="dbody">
            <div class="fields">
              <label class="req" for="f1">输入点要素</label>
              <div class="frow first"><span class="sunken"><input id="f1" type="text"><button type="button" aria-label="展开"><i class="caret"></i></button></span><button type="button" class="browse" aria-label="浏览"><svg><use href="#open"/></svg></button></div>
              <label class="req" for="f2">Z 值字段</label>
              <div class="frow sel2"><span class="selwrap"><select id="f2"><option></option></select><svg><use href="#chevthin"/></svg></span></div>
              <label class="req" for="f3">输出表面栅格</label>
              <div class="frow"><input id="f3" class="text" type="text"><button type="button" class="browse" aria-label="浏览"><svg><use href="#open"/></svg></button></div>
              <p class="group" id="semi">半变异函数属性</p>
              <div class="box" role="group" aria-labelledby="semi">
                <div class="brow"><span class="blabel">克里金方法:</span><label class="radio"><input type="radio" name="m" checked>普通克里金</label><label class="radio"><input type="radio" name="m">泛克里金</label></div>
                <div class="brow second"><label class="blabel" for="f4">半变异模型:</label><span class="selwrap gray"><select id="f4"><option>球面函数</option></select><svg><use href="#chevthin"/></svg></span></div>
                <button type="button" class="btn adv">高级参数...</button>
              </div>
              <label class="plain" for="f5">输出像元大小 (可选)</label>
              <div class="frow"><input id="f5" class="text" type="text"><button type="button" class="browse" aria-label="浏览"><svg><use href="#open"/></svg></button></div>
              <label class="plain last" for="f6">搜索半径 (可选)</label>
              <select id="f6" class="cutoff"><option></option></select>
            </div>
            <div class="vscroll dlg"><button type="button" aria-label="向上"><svg class="up"><use href="#chev"/></svg></button><div class="track"><i class="thumb dthumb"></i></div><button type="button" aria-label="向下"><svg><use href="#chev"/></svg></button></div>
          </div>
          <footer class="dfoot"><button type="submit" class="btn w86">确定</button><button type="button" class="btn w86">取消</button><button type="button" class="btn w103">环境...</button><button type="button" class="btn w112">显示帮助 &gt;&gt;</button></footer>
        </form>
      </div>
    </section>

    <aside class="toolboxes">
      <div class="panelhead"><h2>ArcToolbox</h2><button aria-label="固定"><svg><use href="#pin"/></svg></button><button aria-label="关闭"><svg><use href="#x"/></svg></button></div>
      <div class="treebox">
        <div class="tree">
          <div class="row rootrow"><svg><use href="#root"/></svg>ArcToolbox</div>
          <ul>
            <li class="row"><button class="exp"></button><svg><use href="#toolbox"/></svg>3D Analyst 工具</li>
            <li class="row"><button class="exp"></button><svg><use href="#toolbox"/></svg>Data Interoperability 工具</li>
            <li class="row"><button class="exp"></button><svg><use href="#toolbox"/></svg>Geostatistical Analyst 工具</li>
            <li class="row"><button class="exp"></button><svg><use href="#toolbox"/></svg>Network Analyst 工具</li>
            <li class="row"><button class="exp"></button><svg><use href="#toolbox"/></svg>Schematics 工具</li>
            <li><div class="row"><button class="exp open"></button><span class="mark m1"><svg><use href="#toolbox"/></svg>Spatial Analyst 工具<em>①</em></span></div>
              <ul>
                <li class="row"><button class="exp"></button><svg><use href="#toolset"/></svg>区域分析</li>
                <li class="row"><button class="exp"></button><svg><use href="#toolset"/></svg>叠加分析</li>
                <li class="row"><button class="exp"></button><svg><use href="#toolset"/></svg>地下水分析</li>
                <li class="row"><button class="exp"></button><svg><use href="#toolset"/></svg>地图代数</li>
                <li class="row"><button class="exp"></button><svg><use href="#toolset"/></svg>多元分析</li>
                <li class="row"><button class="exp"></button><svg><use href="#toolset"/></svg>太阳辐射</li>
                <li class="row"><button class="exp"></button><svg><use href="#toolset"/></svg>密度分析</li>
                <li class="row"><button class="exp"></button><svg><use href="#toolset"/></svg>局部分析</li>
                <li class="row"><button class="exp"></button><svg><use href="#toolset"/></svg>提取分析</li>
                <li><div class="row"><button class="exp open"></button><span class="mark m2"><svg><use href="#toolset"/></svg>插值分析<em>②</em></span></div>
                  <ul class="tools">
                    <li class="row"><span class="mark m3"><svg><use href="#hammer"/></svg><span class="hot">克里金法</span><em>③</em></span></li>
                    <li class="row"><svg><use href="#hammer"/></svg>反距离权重法</li>
                    <li class="row"><svg><use href="#script"/></svg>含障碍的样条函数</li>
                    <li class="row"><svg><use href="#hammer"/></svg>地形转栅格</li>
                    <li class="row"><svg><use href="#hammer"/></svg>样条函数法</li>
                    <li class="row"><svg><use href="#hammer"/></svg>自然邻域法</li>
                    <li class="row"><svg><use href="#hammer"/></svg>趋势面法</li>
                    <li class="row"><svg><use href="#hammer"/></svg>通过文件实现地形转栅格</li>
                  </ul>
                </li>
                <li class="row"><button class="exp"></button><svg><use href="#toolset"/></svg>数学分析</li>
                <li class="row"><button class="exp"></button><svg><use href="#toolset"/></svg>条件分析</li>
                <li class="row"><button class="exp"></button><svg><use href="#toolset"/></svg>栅格创建</li>
                <li class="row"><button class="exp"></button><svg><use href="#toolset"/></svg>栅格综合</li>
                <li class="row"><button class="exp"></button><svg><use href="#toolset"/></svg>水文分析</li>
                <li class="row"><button class="exp"></button><svg><use href="#toolset"/></svg>表面</li>
                <li class="row"><button class="exp"></button><svg><use href="#toolset"/></svg>表面分析</li>
                <li class="row"><button class="exp"></button><svg><use href="#toolset"/></svg>距离分析</li>
                <li class="row"><button class="exp"></button><svg><use href="#toolset"/></svg>邻域分析</li>
                <li class="row"><button class="exp"></button><svg><use href="#toolset"/></svg>重分类</li>
              </ul>
            </li>
            <li class="row"><button class="exp"></button><svg><use href="#toolbox"/></svg>Tracking Analyst 工具</li>
            <li class="row"><button class="exp"></button><svg><use href="#toolbox"/></svg>编辑工具</li>
            <li class="row"><button class="exp"></button><svg><use href="#toolbox"/></svg>地理编码工具</li>
            <li class="row"><button class="exp"></button><svg><use href="#toolbox"/></svg>多维工具</li>
            <li class="row"><button class="exp"></button><svg><use href="#toolbox"/></svg>分析工具</li>
            <li class="row"><button class="exp"></button><svg><use href="#toolbox"/></svg>服务器工具</li>
            <li class="row"><button class="exp"></button><svg><use href="#toolbox"/></svg>空间统计工具</li>
          </ul>
        </div>
        <div class="vscroll wide"><button aria-label="向上"><svg class="up"><use href="#chev"/></svg></button><div class="track"><i class="thumb tthumb"></i></div><button aria-label="向下"><svg><use href="#chev"/></svg></button></div>
      </div>
      <div class="tabs">
        <button class="tab active"><svg><use href="#tbwin"/></svg>ArcToolbox</button><button class="tab"><svg><use href="#props"/></svg>属性</button><button class="tab"><svg><use href="#catalog"/></svg>目录</button><button class="tab"><svg><use href="#search"/></svg>搜索</button><button class="tab"><svg><use href="#create"/></svg>创建要素</button>
      </div>
    </aside>
  </main>

  <footer class="status"><span>此地理处理工具使用克里金法将点插值为表面。</span><span class="coords"><span>-44152.061</span><span>3339608.262 十进制度</span></span></footer>
  <div class="meter" aria-hidden="true"><i></i></div>
</div>
</body>
</html>
```

FILE: styles.css
```css
* { box-sizing: border-box; }
html, body { margin: 0; height: 100%; }
body { font: 12px/16px "Noto Sans", "Noto Sans CJK SC", sans-serif; color: #000; background: #f0f0f0; }
button, input, select { font: inherit; color: inherit; margin: 0; padding: 0; border: 0; background: none; border-radius: 0; }
h1, h2, p, ul { margin: 0; padding: 0; font-weight: normal; }
ul { list-style: none; }
svg { display: block; flex: none; width: 16px; height: 16px; }
.sprite { position: absolute; width: 0; height: 0; }

.app { position: relative; display: flex; flex-direction: column; height: 100vh; overflow: hidden; }

/* window title */
.titlebar { display: flex; align-items: center; height: 29px; flex: none; padding: 0 3px 1px 2px; background: #fff; color: #999; }
.logo { width: 20px; height: 20px; }
.titlebar h1 { margin-left: 5px; font-size: 15px; line-height: 20px; }
.winbtns { display: flex; margin-left: auto; color: #999; }
.winbtns button { display: flex; justify-content: center; align-items: center; width: 59px; height: 28px; }
.winbtns svg { width: 12px; height: 12px; }

/* menus and toolbars */
.menubar { display: flex; flex: none; gap: 1px; height: 27px; padding-left: 4px; align-items: center; background: linear-gradient(90deg, #f0f0f0, #fbfbfb); }
.menubar button { padding: 0 8px; }
.toolrow { display: flex; flex: none; height: 27px; background: linear-gradient(90deg, #f0f0f0, #fbfbfb); }
.toolbar { display: flex; align-items: center; height: 26px; margin-right: 1px; background: linear-gradient(#fcfcfc, #eee); border-radius: 2px; }
.grip { flex: none; width: 2px; height: 14px; margin: 0 3px 0 5px; background: repeating-linear-gradient(#bdbdbd 0 2px, transparent 2px 4px); }
.tb { display: flex; flex: none; align-items: center; justify-content: center; width: 22px; height: 22px; }
.tb:disabled svg { filter: grayscale(1); opacity: .5; }
.tb.on { border: 1px solid #0078d7; background: #d9e8f5; }
.tb.dim { border: 1px solid #a3b8cc; background: #dde6ee; }
.sep { flex: none; width: 1px; height: 14px; margin: 0 2px 0 3px; background: #b4b4b4; }
.drop { flex: none; width: 11px; height: 22px; display: flex; align-items: center; justify-content: center; }
.drop::before, .caret { content: ""; border: 3px solid transparent; border-top: 4px solid #000; border-bottom: 0; }
.drop:disabled::before { border-top-color: #999; }
.more { align-self: stretch; width: 10px; margin-left: 2px; background: linear-gradient(#f0f0f0, #a0a0a0); display: flex; flex-direction: column; align-items: center; justify-content: flex-end; padding-bottom: 3px; gap: 2px; }
.more::before { content: ""; width: 6px; height: 1px; background: #000; box-shadow: 1px 1px #fff; }
.more::after { content: ""; border: 3px solid transparent; border-top: 3px solid #000; border-bottom: 0; }
.editor { display: flex; align-items: center; justify-content: space-between; width: 67px; padding: 0 4px 0 5px; }
.combo { display: flex; align-items: center; flex: none; height: 23px; border: 1px solid #777; background: #fff; font-family: "Liberation Mono", monospace; }
.combo button { flex: none; width: 20px; display: flex; justify-content: center; }
.combo svg { width: 10px; height: 10px; color: #444; }
.scale { width: 148px; font-size: 13px; }
.scale input { flex: 1; min-width: 0; padding-left: 2px; outline: 0; }
.percent { width: 60px; border-color: #ccc; font-size: 13px; }
.pct { flex: 1; margin-left: 2px; background: #0078d7; color: #445a70; }

/* panels */
.work { display: flex; flex: 1; min-height: 0; }
.contents, .toolboxes { display: flex; flex-direction: column; flex: none; min-height: 0; }
.contents { width: 174px; }
.panelhead { display: flex; flex: none; align-items: center; height: 22px; padding: 0 2px 0 4px; background: linear-gradient(90deg, #bccbd9, #d6e4f1); }
.panelhead h2 { flex: 1; font-size: 12px; }
.panelhead button { width: 15px; display: flex; justify-content: center; }
.panelhead svg { width: 9px; height: 9px; }
.listbar { display: flex; flex: none; align-items: center; height: 26px; padding-left: 4px; background: #f6f6f6; }
.layerbox { display: flex; flex: 1; min-height: 0; flex-direction: column; justify-content: space-between; border: 1px solid #828790; padding: 0 1px 2px; background: #fff; overflow: hidden; font-size: 15px; line-height: 20px; }
.layers { padding-left: 7px; }
.layers ul { padding-left: 19px; }
.lrow { display: flex; align-items: center; height: 23px; gap: 5px; white-space: nowrap; }
.lrow label { display: flex; align-items: center; gap: 6px; margin-left: 2px; }
.lrow .sel { background: #0078d7; color: #fff; line-height: 23px; }
.lrow label span { padding: 0 2px; }
.lrow input { appearance: none; width: 12px; height: 12px; border: 1px solid #000; background: #fff; display: flex; justify-content: center; }
.lrow input:checked::after { content: ""; width: 4px; height: 7px; border: solid #000; border-width: 0 2px 2px 0; transform: rotate(40deg); }
.lrow.sym { padding-left: 30px; }
.dot { width: 8px; height: 8px; margin-left: 3px; border: 2px solid #000; border-radius: 3px; background: #6a0091; }
.patch { width: 15px; height: 11px; border: 1px solid #6e6e6e; background: #c9cef5; }
.exp { position: relative; flex: none; width: 9px; height: 9px; border: 1px solid #989898; background: #fafafa; }
.exp::before, .exp::after { content: ""; position: absolute; background: #2b4c9e; }
.exp::before { left: 1px; right: 1px; top: 3px; height: 1px; }
.exp::after { top: 1px; bottom: 1px; left: 3px; width: 1px; }
.exp.open::after { display: none; }

/* scroll bars */
.hscroll, .vscroll { display: flex; flex: none; background: #f0f0f0; color: #555; }
.hscroll { height: 19px; }
.vscroll { flex-direction: column; width: 19px; }
.hscroll button, .vscroll button { flex: none; display: flex; align-items: center; justify-content: center; width: 19px; height: 18px; }
.hscroll svg, .vscroll svg { width: 10px; height: 10px; }
.vscroll .up { transform: rotate(180deg); }
.hscroll .left { transform: rotate(90deg); }
.hscroll .right { transform: rotate(-90deg); }
.track { flex: 1; min-width: 0; min-height: 0; display: flex; }
.vscroll .track { flex-direction: column; }
.thumb { background: #cdcdcd; }
.thumb.full { flex: 1; }
.thumb.short { width: 26px; margin-left: 2px; }

/* map window */
.mapwin { position: relative; display: flex; flex-direction: column; flex: 1; min-width: 0; margin: 0 7px 0 4px; }
.maprow { display: flex; flex: 1; min-height: 0; }
.canvas { flex: 1; min-width: 0; overflow: hidden; border: 2px solid #696969; border-width: 2px 0 0 2px; background: #fff; }
.maprow .vscroll { border-top: 2px solid #696969; }
.map { width: 100%; height: 100%; }
.land { fill: #c9cef5; stroke: #6e6e6e; stroke-width: 3; }
.dots, .cores { fill: none; }
.dots { stroke: #000; stroke-width: 24; stroke-linecap: round; }
.cores { stroke: #6a0091; stroke-width: 12; stroke-linecap: square; }
.viewbar { display: flex; flex: none; align-items: flex-start; height: 22px; padding-top: 1px; background: #f0f0f0; border-left: 2px solid #696969; }
.vb { flex: none; display: flex; align-items: center; justify-content: center; width: 17px; height: 14px; }
.vb svg { width: 10px; height: 10px; }
.vb.on { background: #bcdcf4; border: 1px solid #7ebbea; }
.viewbar .hscroll { flex: 1; min-width: 0; height: 18px; }
.corner { flex: none; width: 19px; }

/* kriging dialog with its red frame */
.callout { position: absolute; left: 91px; top: -2px; padding: 5px 5px 4px 6px; border: 3px solid #fb3a38; }
.dialog { display: flex; flex-direction: column; width: 602px; height: 507px; border: 1px solid #999; background: #f0f0f0; font: 15px/18px "Liberation Mono", "Noto Sans CJK SC", monospace; color: #111; }
.dtitle { display: flex; flex: none; align-items: center; height: 37px; padding: 0 0 1px 9px; background: #fff; color: #999; font-family: "Noto Sans", "Noto Sans CJK SC", sans-serif; }
.dicon { width: 20px; height: 20px; }
.dtitle h2 { margin-left: 5px; font-size: 15px; }
.dtitle .winbtns svg { width: 13px; height: 13px; }
.dbody { display: flex; flex: 1; min-height: 0; margin: 0 4px 0 1px; border: 2px solid #696969; border-width: 2px 1px 1px 2px; border-right-color: #fff; border-bottom-color: #fff; overflow: hidden; }
.fields { flex: 1; min-width: 0; padding: 11px 11px 0 18px; }
.fields > label { display: block; height: 20px; padding-top: 2px; line-height: 20px; white-space: pre; }
.fields > label.req { position: relative; }
.req::before { content: ""; position: absolute; left: -13px; top: 6px; width: 7px; height: 7px; border-radius: 4px; background: #00f000; box-shadow: 1px 1px #333; }
.frow { display: flex; align-items: center; gap: 10px; height: 30px; }
.frow.first { margin-bottom: 2px; }
.frow.sel2 { height: 23px; margin-bottom: 1px; }
.sunken { display: flex; flex: 1; height: 24px; padding: 0; border: 2px solid #696969; border-width: 2px 1px 1px 2px; border-right-color: #fff; border-bottom-color: #fff; background: #fff; }
.sunken input { flex: 1; min-width: 0; }
.sunken button { width: 16px; display: flex; justify-content: center; align-items: center; background: #f0f0f0; border-bottom: 2px solid #696969; }
.sunken .caret { border-width: 5px 5px 0; }
.text { flex: 1; min-width: 0; height: 24px; border: 1px solid #7a7a7a; background: #fff; }
.browse { flex: none; width: 26px; height: 30px; border: 1px solid #adadad; background: #e1e1e1; display: flex; align-items: center; justify-content: center; }
.selwrap { position: relative; flex: 1; display: flex; height: 23px; }
.selwrap select { appearance: none; width: 100%; border: 1px solid #7a7a7a; background: #fff; padding-left: 4px; }
.selwrap svg { position: absolute; right: 4px; top: 7px; width: 11px; height: 11px; color: #333; pointer-events: none; }
.selwrap.gray { flex: none; width: 240px; }
.selwrap.gray select { padding-top: 2px; border-color: #adadad; background: #e1e1e1; line-height: 18px; }
.group { margin: 4px 0; line-height: 20px; }
.box { width: 413px; height: 144px; margin-bottom: 5px; padding: 16px 8px 0 13px; border: 1px solid #dcdcdc; }
.brow { display: flex; align-items: center; height: 24px; }
.brow.second { margin-top: 15px; }
.blabel { flex: none; width: 151px; align-self: flex-start; }
.radio { display: flex; flex: none; align-items: center; gap: 5px; width: 126px; }
.radio input { appearance: none; width: 16px; height: 16px; border: 1px solid #333; border-radius: 50%; background: #fff; }
.radio input:checked { background: radial-gradient(#333 0 5px, #fff 6px); }
.btn { height: 26px; border: 1px solid #adadad; background: #e1e1e1; white-space: nowrap; }
.adv { display: block; width: 143px; height: 30px; margin: 18px 1px 0 auto; }
.fields > .last { margin-top: 2px; }
.cutoff { display: block; width: 196px; height: 23px; margin-top: 4px; border: 1px solid #adadad; background: #e1e1e1; appearance: none; }
.vscroll.dlg { width: 16px; padding: 13px 0 12px; }
.vscroll.dlg button { width: 15px; }
.dthumb { height: 228px; margin-top: 3px; }
.dfoot { display: flex; flex: none; justify-content: flex-end; gap: 7px; height: 53px; padding: 12px 10px 0; font-family: "Noto Sans", "Noto Sans CJK SC", sans-serif; font-size: 15px; }
.w86 { width: 86px; }
.w103 { width: 103px; }
.w112 { width: 112px; }

/* toolbox tree */
.toolboxes { width: 357px; background: #f6f6f6; }
.toolboxes .panelhead { height: 23px; }
.treebox { display: flex; flex: 1; min-height: 0; border: 1px solid #828790; background: #fff; overflow: hidden; }
.tree { flex: 1; min-width: 0; min-height: 0; overflow: hidden; padding-left: 8px; }
.tree ul ul { padding-left: 19px; }
.row { display: flex; align-items: center; height: 20px; white-space: nowrap; }
.row svg { margin-right: 5px; }
.row .exp { margin-right: 6px; }
.rootrow { margin-left: -4px; }
.tools { margin-left: 15px; }
.mark { position: relative; display: flex; align-items: center; }
.mark::before { content: ""; position: absolute; border: 3px solid #fb3a38; inset: -3px -11px -2px -5px; }
.mark.m2::before { inset: -2px -9px -1px -5px; }
.mark.m3::before { inset: 0 -11px 0 -3px; }
.mark em { position: absolute; left: 100%; margin-left: 19px; bottom: 7px; font: 22px/22px "Noto Sans CJK SC", sans-serif; color: #fb3a38; }
.mark.m2 em { bottom: 9px; }
.mark.m3 em { bottom: 0; margin-left: 21px; }
.hot { background: #f0f0f0; }
.vscroll.wide { width: 21px; padding-right: 2px; }
.vscroll.wide button { height: 21px; }
.tthumb { height: 683px; }
.tabs { display: flex; flex: none; gap: 1px; height: 22px; padding-left: 2px; align-items: flex-start; }
.tab { display: flex; align-items: center; gap: 4px; height: 20px; padding: 0 3px 0 4px; border: 1px solid #a0a0a0; border-top: 0; border-radius: 0 0 3px 3px; background: #f0f0f0; color: #666; }
.tab.active { background: #fff; color: #000; }

/* status line */
.status { display: flex; flex: none; justify-content: space-between; align-items: center; height: 21px; padding: 0 85px 0 3px; background: #f0f0f0; }
.coords { display: flex; gap: 9px; }
.meter { position: absolute; right: 0; top: 51px; width: 13px; height: 74px; padding: 9px 2px 8px 5px; border-radius: 4px 0 0 4px; background: #50535f; }
.meter i { display: block; height: 100%; background: repeating-linear-gradient(transparent 0 3px, #50535f 3px 5px), linear-gradient(#3a3d47 0 28%, #e8b23c 32%, #c9d84a 50%, #7fdc72 70%, #4cc9bd); }
```
